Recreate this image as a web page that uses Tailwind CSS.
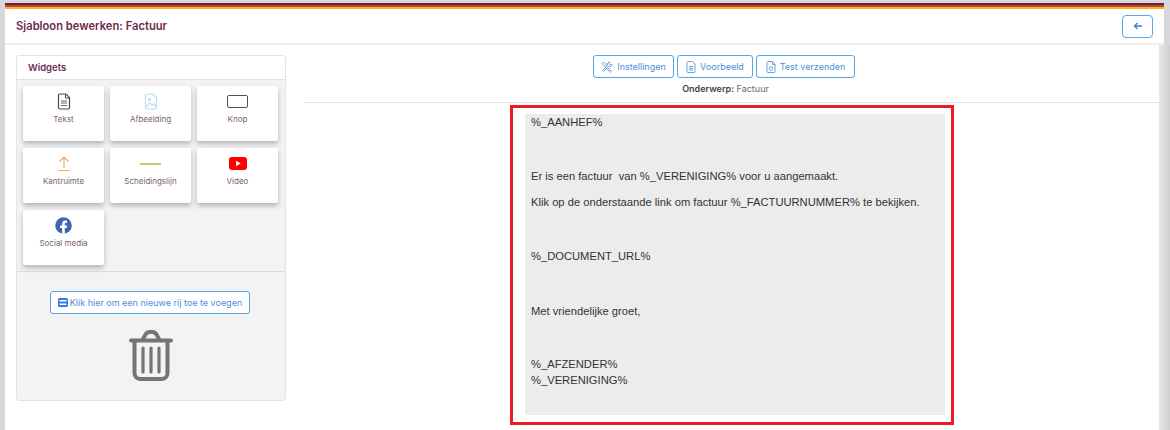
<!DOCTYPE html>
<html><head><meta charset="utf-8">
<script src="https://cdn.jsdelivr.net/npm/@tailwindcss/browser@4"></script>
</head>
<body class="w-[1170px] h-[430px] overflow-hidden bg-[#d6d8dc] font-['Inter',sans-serif]">
<div class="ml-[5px] mr-[6px] pt-[3px] h-[430px] flex flex-col">
  <div class="h-[6px] flex flex-col shrink-0">
    <div class="h-[2px] bg-[#6d1f45]"></div><div class="h-[2px] bg-[#c9431f]"></div><div class="h-[2px] bg-[#f7b232]"></div>
  </div>
  <div class="h-[36px] shrink-0 bg-white border-b-2 border-[#eceef0] flex items-center justify-between pl-[11px] pr-[11px]">
    <span class="text-[11.2px] font-semibold text-[#6f2b4f]">Sjabloon bewerken: Factuur</span>
    <button class="w-[31px] h-[23px] rounded-[4px] border border-[#5aa8ea] flex items-center justify-center">
      <svg width="10" height="10" viewBox="0 0 10 10" fill="none" stroke="#2f7fe0" stroke-width="1.300"><path d="M9 5H1.500M4.500 2L1.500 5l3 3"/></svg>
    </button>
  </div>
  <div class="flex-1 flex min-h-0 -mr-[6px]">
  <div class="w-[1154px] shrink-0 bg-white flex pl-[11px] pt-[10px] min-h-0">
    <div class="w-[270px] h-[346px] shrink-0 rounded-[3px] border border-[#e4e4e4] bg-[#f3f3f3] flex flex-col">
      <div class="h-[24px] pt-[1px] bg-white border-b border-[#e0e0e0] rounded-t-[3px] px-[11px] flex items-center text-[9.5px] font-semibold text-[#6f2b4f]">Widgets</div>
      <div class="h-[192px] grid grid-cols-[81px_81px_81px] auto-rows-[55px] gap-x-[6px] gap-y-[7px] pl-[6px] pt-[6px] border-b border-[#dcdcdc]">
        <div class="bg-white rounded-[2px] shadow-[0_3px_5px_rgba(0,0,0,0.25)] flex flex-col items-center pt-[7px]">
          <svg class="h-[17px]" width="14" height="17" viewBox="0 0 14 17" fill="none"><path d="M1.500 2.500a1.500 1.500 0 0 1 1.500-1.500h6l3.500 3.500v10a1.500 1.500 0 0 1-1.500 1.500H3a1.500 1.500 0 0 1-1.500-1.500z" stroke="#4a4a55" stroke-width="1.200"/><path d="M8.500 1v4h4" stroke="#4a4a55"/><path d="M4 8h6M4 10h6M4 12.500h6" stroke="#6a6a70" stroke-width="1.100"/></svg>
          <span class="mt-[3px] text-[8px] leading-[12px] text-[#7b6270]">Tekst</span>
        </div>
        <div class="bg-white rounded-[2px] shadow-[0_3px_5px_rgba(0,0,0,0.25)] flex flex-col items-center pt-[7px]">
          <svg class="h-[17px]" width="14" height="17" viewBox="0 0 14 17" fill="none" stroke="#b3dcf8" stroke-width="1.100"><path d="M1.500 2.500a1.500 1.500 0 0 1 1.500-1.500h6l3.500 3.500v10a1.500 1.500 0 0 1-1.500 1.500H3a1.500 1.500 0 0 1-1.500-1.500z"/><path d="M2.500 14l3-4 2.500 2 2-1.500 2 3"/><circle cx="5.500" cy="6.500" r="1"/></svg>
          <span class="mt-[3px] text-[8px] leading-[12px] text-[#7b6270]">Afbeelding</span>
        </div>
        <div class="bg-white rounded-[2px] shadow-[0_3px_5px_rgba(0,0,0,0.25)] flex flex-col items-center pt-[9px]">
          <div class="w-[21px] h-[13px] rounded-[2px] border-[1.500px] border-[#4f4f55]"></div>
          <span class="mt-[5px] text-[8px] leading-[12px] text-[#7b6270]">Knop</span>
        </div>
        <div class="bg-white rounded-[2px] shadow-[0_3px_5px_rgba(0,0,0,0.25)] flex flex-col items-center pt-[7px]">
          <svg class="h-[17px]" width="14" height="17" viewBox="0 0 14 17" fill="none" stroke="#f9a65a" stroke-width="1.200"><path d="M7 13V2M2.500 6.500L7 2l4.500 4.500M1 15.500h12"/></svg>
          <span class="mt-[3px] text-[8px] leading-[12px] text-[#7b6270]">Kantruimte</span>
        </div>
        <div class="bg-white rounded-[2px] shadow-[0_3px_5px_rgba(0,0,0,0.25)] flex flex-col items-center pt-[7px]">
          <div class="h-[17px] flex items-center"><div class="w-[21px] h-[2px] bg-[#b5d56a]"></div></div>
          <span class="mt-[3px] text-[8px] leading-[12px] text-[#7b6270]">Scheidingslijn</span>
        </div>
        <div class="bg-white rounded-[2px] shadow-[0_3px_5px_rgba(0,0,0,0.25)] flex flex-col items-center pt-[7px]">
          <svg class="h-[17px]" width="18" height="17" viewBox="0 0 18 17"><rect x="0" y="2" width="18" height="13" rx="3" fill="#f00"/><path d="M7 5.800v5.400l4.800-2.700z" fill="#fff"/></svg>
          <span class="mt-[3px] text-[8px] leading-[12px] text-[#7b6270]">Video</span>
        </div>
        <div class="bg-white rounded-[2px] shadow-[0_3px_5px_rgba(0,0,0,0.25)] flex flex-col items-center pt-[7px]">
          <svg class="h-[17px]" width="17" height="17" viewBox="0 0 17 17"><circle cx="8.500" cy="8.500" r="8.300" fill="#3f65b0"/><path d="M7.200 16.800v-5.900H5.100V8.500h2.100V6.700c0-2.100 1.200-3.200 3.100-3.200.9 0 1.800.2 1.800.2v2h-1c-1 0-1.300.6-1.300 1.300v1.500h2.300l-.4 2.400H9.800v5.900z" fill="#fff"/></svg>
          <span class="mt-[3px] text-[8px] leading-[12px] text-[#7b6270]">Social media</span>
        </div>
      </div>
      <div class="flex flex-col items-center pt-[19px]">
        <button class="w-[200px] h-[23px] -ml-[2px] bg-white rounded-[3px] border border-[#58a5e6] flex items-center justify-center gap-[2px] text-[9px] text-[#4a8fdc]">
          <svg width="10" height="9" viewBox="0 0 10 9"><rect width="10" height="9" rx="1.500" fill="#2f7fe0"/><path d="M1.500 2.800h7M1.500 6.200h7" stroke="#fff" stroke-width="1.400"/></svg>
          Klik hier om een nieuwe rij toe te voegen
        </button>
        <svg class="mt-[16px]" width="44" height="51" viewBox="0 0 44 51" fill="none" stroke="#757575" stroke-linecap="round"><path d="M2 10.500h40" stroke-width="4"/><path d="M14 9l2.500-4.500a5 5 0 0 1 4-2.500h3a5 5 0 0 1 4 2.500L30 9" stroke-width="4"/><path d="M5.500 11v32a6 6 0 0 0 6 6h21a6 6 0 0 0 6-6V11" stroke-width="4"/><path d="M14 18v24M22 18v24M30 18v24" stroke-width="3.200"/></svg>
      </div>
    </div>
    <div class="flex-1 ml-[18px] flex flex-col items-stretch min-w-0">
      <div class="w-[262px] ml-[289px] flex flex-col">
        <div class="flex gap-[3px]">
          <button class="h-[23px] w-[81px] rounded-[3px] border border-[#58a5e6] flex items-center justify-center gap-[4px] text-[9px] text-[#4a8fdc]">
            <svg width="12" height="12" viewBox="0 0 12 12" fill="none" stroke="#6aa3e0" stroke-width="1"><path d="M1 2.500L2.500 1l3 3-1.500 1.500zM5 5l5.500 5.500-1 1L4 6M11 3a2.500 2.500 0 0 1-3.500 2.500L2.500 10.500 1.500 9.500 6.500 4.500A2.500 2.500 0 0 1 9 1L7.800 2.500 9.300 4z"/></svg>Instellingen</button>
          <button class="h-[23px] w-[76px] rounded-[3px] border border-[#58a5e6] flex items-center justify-center gap-[4px] text-[9px] text-[#4a8fdc]">
            <svg width="10" height="12" viewBox="0 0 10 12" fill="none" stroke="#6aa3e0" stroke-width="1"><path d="M1 1.500a1 1 0 0 1 1-1h4.500l2.500 2.500v7.500a1 1 0 0 1-1 1H2a1 1 0 0 1-1-1zM3 5.500h4M3 7.300h4M3 9h4"/></svg>Voorbeeld</button>
          <button class="h-[23px] w-[99px] rounded-[3px] border border-[#58a5e6] flex items-center justify-center gap-[4px] text-[9px] text-[#4a8fdc]">
            <svg width="10" height="12" viewBox="0 0 10 12" fill="none" stroke="#6aa3e0" stroke-width="1"><path d="M1 1.500a1 1 0 0 1 1-1h4.500l2.500 2.500v7.500a1 1 0 0 1-1 1H2a1 1 0 0 1-1-1z"/><circle cx="5" cy="7.500" r="1.800"/><path d="M6.500 1v2.500h2.500"/></svg>Test verzenden</button>
        </div>
        <div class="mt-[4px] h-[13px] pl-[3px] text-center text-[9px] leading-[13px] text-[#6b6b6b]"><span class="font-semibold text-[#444]">Onderwerp:</span> Factuur</div>
      </div>
      <div class="mt-[7px] border-t border-[#e4e4e4]"></div>
      <div class="mt-[2px] ml-[206px] w-[444px] h-[320px] shrink-0 border-[3px] border-[#ed1c24] pt-[6px] pl-[12px] pr-[6px]">
        <div class="h-[301px] bg-[#ececec] pl-[6px] pt-[1px] font-['Liberation_Sans',sans-serif] text-[11.2px] leading-[14px] text-[#333]">
          <p class="h-[14px]">%_AANHEF%</p>
          <p class="mt-[40px] h-[14px]">Er is een factuur&nbsp; van %_VERENIGING% voor u aangemaakt.</p>
          <p class="mt-[12px] h-[14px]">Klik op de onderstaande link om factuur %_FACTUURNUMMER% te bekijken.</p>
          <p class="mt-[40px] h-[14px]">%_DOCUMENT_URL%</p>
          <p class="mt-[41px] h-[14px]">Met vriendelijke groet,</p>
          <p class="mt-[39px] h-[14px]">%_AFZENDER%</p>
          <p class="h-[14px] mt-[2px]">%_VERENIGING%</p>
        </div>
      </div>
    </div>
  </div>
  <div class="w-[11px] shrink-0 bg-gradient-to-r from-[#e8e8e8] to-[#cfcfcf]"></div>
  </div>
</div>
</body></html>
